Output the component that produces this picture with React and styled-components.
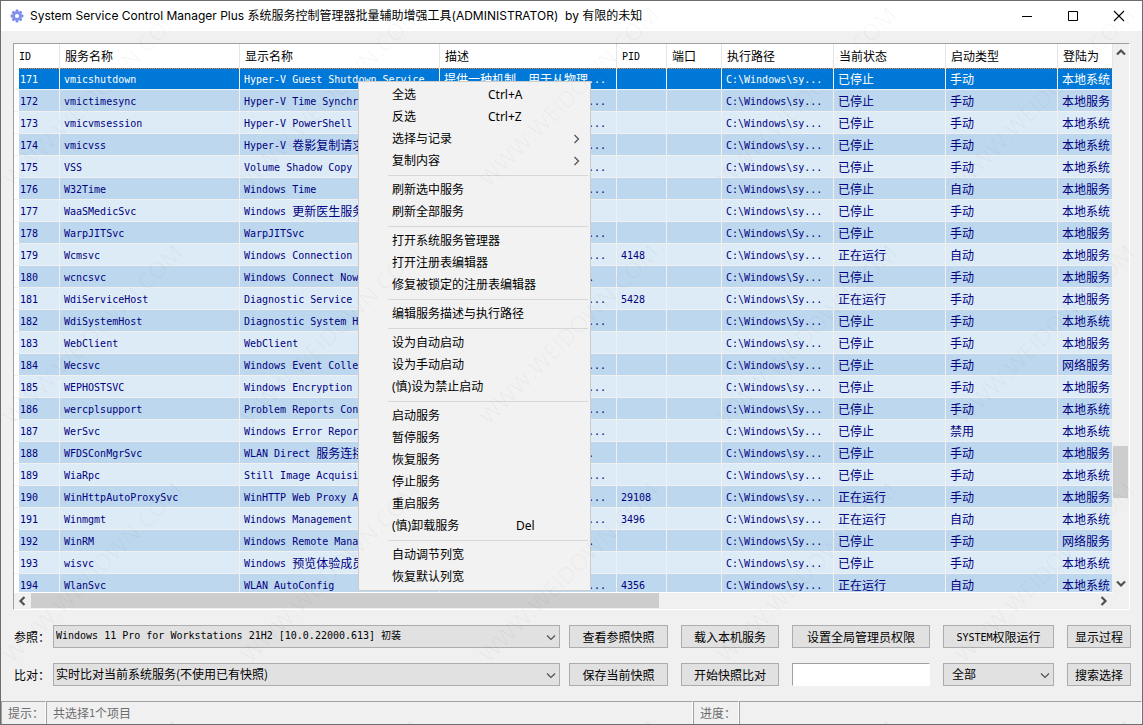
import React, { useState } from 'react';
import styled, { createGlobalStyle, css } from 'styled-components';

const columns = ['ID', '服务名称', '显示名称', '描述', 'PID', '端口', '执行路径', '当前状态', '启动类型', '登陆为'];
const columnWidths = [46, 180, 200, 177, 50, 55, 112, 112, 112];

const SY = 'C:\\Windows\\Sy...';
const sy = 'C:\\Windows\\sy...';

const services = [
  ['171', 'vmicshutdown', 'Hyper-V Guest Shutdown Service', '提供一种机制，用于从物理...', '', '', sy, '已停止', '手动', '本地系统'],
  ['172', 'vmictimesync', 'Hyper-V Time Synchronization ...', '将此虚拟机的系统时间与物...', '', '', sy, '已停止', '手动', '本地服务'],
  ['173', 'vmicvmsession', 'Hyper-V PowerShell Direct Se...', '提供一种机制，可通过虚拟...', '', '', sy, '已停止', '手动', '本地系统'],
  ['174', 'vmicvss', 'Hyper-V 卷影复制请求程序', '协调使用卷影复制服务从物...', '', '', sy, '已停止', '手动', '本地系统'],
  ['175', 'VSS', 'Volume Shadow Copy', '管理并执行用于备份和其他...', '', '', sy, '已停止', '手动', '本地系统'],
  ['176', 'W32Time', 'Windows Time', '维护在网络上的所有客户端...', '', '', sy, '已停止', '自动', '本地服务'],
  ['177', 'WaaSMedicSvc', 'Windows 更新医生服务', '启用 Windows 更新组件...', '', '', sy, '已停止', '手动', '本地系统'],
  ['178', 'WarpJITSvc', 'WarpJITSvc', '提供用于图形渲染的实时编...', '', '', SY, '已停止', '手动', '本地服务'],
  ['179', 'Wcmsvc', 'Windows Connection Manager', '根据电脑当前可用的网络连...', '4148', '', sy, '正在运行', '自动', '本地服务'],
  ['180', 'wcncsvc', 'Windows Connect Now', 'WCNCSVC 承载用于注册的...', '', '', SY, '已停止', '手动', '本地服务'],
  ['181', 'WdiServiceHost', 'Diagnostic Service Host', '诊断服务主机被诊断策略服...', '5428', '', SY, '正在运行', '手动', '本地服务'],
  ['182', 'WdiSystemHost', 'Diagnostic System Host', '诊断系统主机被诊断策略服...', '', '', SY, '已停止', '手动', '本地系统'],
  ['183', 'WebClient', 'WebClient', '使基于 Windows 的程序...', '', '', sy, '已停止', '手动', '本地服务'],
  ['184', 'Wecsvc', 'Windows Event Collector', '此服务将管理对远程源中事...', '', '', sy, '已停止', '手动', '网络服务'],
  ['185', 'WEPHOSTSVC', 'Windows Encryption Provider', '加密提供程序主机服务代理...', '', '', sy, '已停止', '手动', '本地服务'],
  ['186', 'wercplsupport', 'Problem Reports Control Panel', '此服务支持查看、发送和删...', '', '', SY, '已停止', '手动', '本地系统'],
  ['187', 'WerSvc', 'Windows Error Reporting', '允许在程序停止运行或停止...', '', '', SY, '已停止', '禁用', '本地系统'],
  ['188', 'WFDSConMgrSvc', 'WLAN Direct 服务连接管理器', '管理与无线服务 (包括的...', '', '', sy, '已停止', '手动', '本地服务'],
  ['189', 'WiaRpc', 'Still Image Acquisition Events', '启动与静止图像采集事件关...', '', '', sy, '已停止', '手动', '本地系统'],
  ['190', 'WinHttpAutoProxySvc', 'WinHTTP Web Proxy Auto', '实现了客户端堆栈并向开发...', '29108', '', sy, '正在运行', '手动', '本地服务'],
  ['191', 'Winmgmt', 'Windows Management', '提供共同的界面和对象模式...', '3496', '', sy, '正在运行', '自动', '本地系统'],
  ['192', 'WinRM', 'Windows Remote Management', 'Windows 远程管理服务执...', '', '', SY, '已停止', '手动', '网络服务'],
  ['193', 'wisvc', 'Windows 预览体验成员服务', '为 Windows 预览体验成...', '', '', sy, '已停止', '手动', '本地系统'],
  ['194', 'WlanSvc', 'WLAN AutoConfig', '提供配置、发现、连接和断...', '4356', '', sy, '正在运行', '自动', '本地系统'],
];

const menuGroups = [
  [{ label: '全选', keys: 'Ctrl+A' }, { label: '反选', keys: 'Ctrl+Z' }, { label: '选择与记录', sub: true }, { label: '复制内容', sub: true }],
  [{ label: '刷新选中服务' }, { label: '刷新全部服务' }],
  [{ label: '打开系统服务管理器' }, { label: '打开注册表编辑器' }, { label: '修复被锁定的注册表编辑器' }],
  [{ label: '编辑服务描述与执行路径' }],
  [{ label: '设为自动启动' }, { label: '设为手动启动' }, { label: '(慎)设为禁止启动' }],
  [
    { label: '启动服务' },
    { label: '暂停服务' },
    { label: '恢复服务' },
    { label: '停止服务' },
    { label: '重启服务' },
    { label: '(慎)卸载服务', keys: 'Del', wide: true },
  ],
  [{ label: '自动调节列宽' }, { label: '恢复默认列宽' }],
];

const arrows = {
  up: 'M1 6.5 L5 2.5 L9 6.5',
  down: 'M1 2.5 L5 6.5 L9 2.5',
  left: 'M6.5 1 L2.5 5 L6.5 9',
  right: 'M2.5 1 L6.5 5 L2.5 9',
};

const Arrow = ({ dir, thin }) => (
  <svg width="10" height="10" viewBox="0 0 10 10" aria-hidden="true">
    <path d={arrows[dir]} fill="none" stroke="#505050" strokeWidth={thin ? 1.2 : 2.2} />
  </svg>
);

// latin runs are half the width of a chinese character
const Mixed = ({ children }) =>
  children.split(/([\x20-\x7e]+)/).map((part, index) =>
    index % 2 ? <Half key={index}>{part}</Half> : part
  );

const Gear = () => (
  <svg width="14" height="14" viewBox="0 0 14 14" aria-hidden="true">
    <g fill="#7f8fec">
      {[0, 45, 90, 135].map(angle => (
        <rect key={angle} x="5.6" y="0.6" width="2.8" height="12.8" rx="0.6" transform={`rotate(${angle} 7 7)`} />
      ))}
      <circle cx="7" cy="7" r="4.7" />
    </g>
    <circle cx="7" cy="7" r="2.1" fill="#fff" />
  </svg>
);

const App = () => {
  const [selected, setSelected] = useState('171');
  const [search, setSearch] = useState('');

  return (
    <Window>
      <GlobalStyle />
      <TitleBar>
        <Gear />
        <Title>
          System Service Control Manager Plus 系统服务控制管理器批量辅助增强工具(ADMINISTRATOR)&nbsp; by 有限的未知
        </Title>
        <Caption aria-label="最小化">
          <svg width="12" height="12" viewBox="0 0 12 12"><path d="M1 6.5h10" stroke="#000" /></svg>
        </Caption>
        <Caption aria-label="最大化">
          <svg width="12" height="12" viewBox="0 0 12 12"><path d="M1.5 1.5h9v9h-9z" fill="none" stroke="#000" /></svg>
        </Caption>
        <Caption aria-label="关闭">
          <svg width="12" height="12" viewBox="0 0 12 12"><path d="M1 1l10 10M11 1L1 11" stroke="#000" strokeWidth="1.1" /></svg>
        </Caption>
      </TitleBar>

      <ListFrame>
        <Viewport>
          <Table>
            <colgroup>
              {columnWidths.map((width, index) => <col key={index} width={width} />)}
              <col />
            </colgroup>
            <thead>
              <tr>
                {columns.map(name => <Head key={name}><Mixed>{name}</Mixed></Head>)}
              </tr>
            </thead>
            <tbody>
              {services.map(row => (
                <Row key={row[0]} $selected={row[0] === selected} onClick={() => setSelected(row[0])}>
                  {row.map((value, index) => (
                    <Cell key={index}><Mixed>{value}</Mixed></Cell>
                  ))}
                </Row>
              ))}
            </tbody>
          </Table>
        </Viewport>
        <VerticalBar>
          <Arrow dir="up" />
          <VerticalTrack><VerticalThumb /></VerticalTrack>
          <Arrow dir="down" />
        </VerticalBar>
        <HorizontalBar>
          <Arrow dir="left" />
          <HorizontalTrack><HorizontalThumb /></HorizontalTrack>
          <Arrow dir="right" />
        </HorizontalBar>
      </ListFrame>

      <Controls>
        <FieldColumn>
          <Field>
            <Label htmlFor="reference">参照：</Label>
            <SelectBox>
              <Select id="reference" $latin>
                <option>Windows 11 Pro for Workstations 21H2 [10.0.22000.613] 初装</option>
              </Select>
              <Arrow dir="down" thin />
            </SelectBox>
          </Field>
          <Field>
            <Label htmlFor="compare">比对：</Label>
            <SelectBox>
              <Select id="compare">
                <option>实时比对当前系统服务(不使用已有快照)</option>
              </Select>
              <Arrow dir="down" thin />
            </SelectBox>
          </Field>
        </FieldColumn>
        <Actions>
          <Button>查看参照快照</Button>
          <Button>载入本机服务</Button>
          <Button>设置全局管理员权限</Button>
          <Button><Mixed>SYSTEM权限运行</Mixed></Button>
          <Button>显示过程</Button>
          <Button>保存当前快照</Button>
          <Button>开始快照比对</Button>
          <Search aria-label="搜索" value={search} onChange={e => setSearch(e.target.value)} />
          <SelectBox>
            <Select aria-label="搜索范围" $indent>
              <option>全部</option>
            </Select>
            <Arrow dir="down" thin />
          </SelectBox>
          <Button>搜索选择</Button>
        </Actions>
      </Controls>

      <StatusBar>
        <Status>提示：</Status>
        <Status><Mixed>共选择1个项目</Mixed></Status>
        <Status>进度：</Status>
        <Status />
      </StatusBar>

      <Menu role="menu">
        {menuGroups.map((group, index) => (
          <Group key={index}>
            {group.map(item => (
              <MenuItem key={item.label} role="menuitem">
                <MenuLabel $wide={item.wide}>{item.label}</MenuLabel>
                <Keys>{item.keys}</Keys>
                {item.sub && <Arrow dir="right" thin />}
              </MenuItem>
            ))}
          </Group>
        ))}
      </Menu>

      <Watermarks aria-hidden="true">
        {Array.from({ length: 20 }, (_, index) => (
          <Mark key={index}><span>WWW.WEIDOWN.COM</span></Mark>
        ))}
      </Watermarks>
    </Window>
  );
};

const GlobalStyle = createGlobalStyle`
  * {
    box-sizing: border-box;
  }
  body {
    margin: 0;
    font-family: 'Noto Sans CJK SC', sans-serif;
    font-size: 12px;
    color: #000;
  }
  button, input, select {
    font: inherit;
    color: inherit;
    margin: 0;
  }
`;

const Half = styled.span`
  font-family: 'DejaVu Sans Mono', monospace;
  font-size: 10px;
  line-height: 1;
  vertical-align: 1px;
  white-space: pre;
`;

const Window = styled.div`
  position: relative;
  display: flex;
  flex-direction: column;
  height: 100vh;
  min-height: 320px;
  overflow: hidden;
  border: 1px solid #6d6d6d;
  background: #f0f0f0;
`;

const TitleBar = styled.header`
  display: flex;
  align-items: center;
  flex: none;
  height: 30px;
  padding-left: 9px;
  background: #fff;
`;

const Title = styled.h1`
  flex: 1;
  margin: 0 0 0 6px;
  font-family: Inter, 'Noto Sans CJK SC', sans-serif;
  font-size: 12px;
  font-weight: 400;
  line-height: 18px;
  white-space: nowrap;
  overflow: hidden;
`;

const Caption = styled.button`
  display: flex;
  align-items: center;
  justify-content: center;
  width: 46px;
  height: 30px;
  padding: 0;
  border: none;
  background: none;
  &:hover {
    background: #e5e5e5;
  }
`;

const ListFrame = styled.main`
  flex: 1;
  min-height: 0;
  display: grid;
  grid-template-columns: minmax(0, 1fr) 16px;
  grid-template-rows: minmax(0, 1fr) 16px;
  margin: 12px 12px 0;
  border: 1px solid #fff;
  border-top-color: #a0a0a0;
  border-left-color: #a0a0a0;
`;

const Viewport = styled.div`
  overflow: hidden;
  border-bottom: 1px solid #fff;
  background: #fff;
`;

const Table = styled.table`
  width: 100%;
  table-layout: fixed;
  border-collapse: separate;
  border-spacing: 0;
`;

const Head = styled.th`
  height: 24px;
  padding: 0 0 0 5px;
  border-right: 1px solid #e5e5e5;
  font-weight: 400;
  line-height: 18px;
  text-align: left;
  white-space: nowrap;
  overflow: hidden;
`;

const Cell = styled.td`
  height: 22px;
  padding: 0 0 0 4px;
  border-right: 1px solid #f0f0f0;
  border-bottom: 1px solid #f0f0f0;
  line-height: 18px;
  white-space: nowrap;
  overflow: hidden;
  &:first-child {
    padding-left: 6px;
    box-shadow: inset 5px 0 #fff;
  }
`;

const Row = styled.tr`
  color: #000080;
  background: #ddebf7;
  &:nth-child(even) {
    background: #bdd7ee;
  }
  ${({ $selected }) =>
    $selected &&
    css`
      && {
        color: #fff;
        background: #0078d7;
      }
      td {
        background: repeating-linear-gradient(90deg, #ff8728 0 1px, transparent 1px 2px) 0 0 / 100% 1px no-repeat;
      }
    `}
`;

const VerticalBar = styled.div`
  display: flex;
  flex-direction: column;
  align-items: center;
  padding: 4px 0;
`;

const VerticalTrack = styled.div`
  display: flex;
  flex-direction: column;
  align-self: stretch;
  flex: 1;
  margin: 3px 0;
  &::before {
    content: '';
    flex: 385;
  }
  &::after {
    content: '';
    flex: 78;
  }
`;

const VerticalThumb = styled.div`
  flex: 52;
  margin-right: 1px;
  background: #cdcdcd;
`;

const HorizontalBar = styled.div`
  grid-column: 1;
  display: flex;
  align-items: center;
  padding: 0 4px;
`;

const HorizontalTrack = styled.div`
  display: flex;
  align-self: stretch;
  flex: 1;
  margin: 0 3px;
  &::after {
    content: '';
    flex: 41;
  }
`;

const HorizontalThumb = styled.div`
  flex: 59;
  margin-bottom: 1px;
  background: #cdcdcd;
`;

const Controls = styled.section`
  flex: none;
  display: flex;
  gap: 9px;
  padding: 15px 11px 15px 13px;
`;

const FieldColumn = styled.div`
  flex: 1;
  display: grid;
  gap: 15px;
`;

const Field = styled.div`
  display: flex;
  align-items: center;
`;

const Label = styled.label`
  flex: none;
  width: 39px;
  white-space: nowrap;
`;

const SelectBox = styled.div`
  position: relative;
  flex: 1;
  min-width: 0;
  svg {
    position: absolute;
    top: 8px;
    right: 4px;
    pointer-events: none;
  }
`;

const Select = styled.select`
  display: block;
  appearance: none;
  width: 100%;
  height: 23px;
  padding: 0 20px 2px ${({ $indent }) => ($indent ? '8px' : '2px')};
  border: 1px solid #adadad;
  border-radius: 0;
  background: #e1e1e1;
  ${({ $latin }) =>
    $latin &&
    css`
      font-family: 'DejaVu Sans Mono', 'Noto Sans CJK SC', monospace;
      font-size: 10px;
    `}
`;

const Actions = styled.div`
  flex: none;
  display: grid;
  grid-template-columns: 99px 98px 138px 111px 64px;
  gap: 15px 13px;
`;

const Button = styled.button`
  height: 23px;
  padding: 0;
  border: 1px solid #adadad;
  background: #e1e1e1;
  line-height: 20px;
  white-space: nowrap;
  &:hover {
    border-color: #0078d7;
    background: #e5f1fb;
  }
`;

const Search = styled.input`
  width: 100%;
  height: 23px;
  padding: 0 4px;
  border: 1px solid #fff;
  border-top-color: #a0a0a0;
  border-left-color: #a0a0a0;
  border-radius: 0;
  background: #fff;
  outline: none;
`;

const StatusBar = styled.footer`
  flex: none;
  display: grid;
  grid-template-columns: 45px 647fr 46px 403fr;
  height: 23px;
`;

const Status = styled.div`
  padding-left: 6px;
  border-top: 1px solid #a0a0a0;
  border-left: 1px solid #a0a0a0;
  border-right: 1px solid #fff;
  color: #6d6d6d;
  line-height: 22px;
  white-space: nowrap;
  overflow: hidden;
`;

const Menu = styled.div`
  position: absolute;
  top: 80px;
  left: 357px;
  width: 233px;
  padding: 2px;
  border: 1px solid #ccc;
  background: #f2f2f2;
  font-family: 'Noto Sans', 'Noto Sans CJK SC', sans-serif;
`;

const Group = styled.div`
  & + &::before {
    content: '';
    display: block;
    height: 1px;
    margin: 3px 0 3px 27px;
    background: #d7d7d7;
  }
`;

const MenuItem = styled.button`
  display: flex;
  align-items: center;
  width: 100%;
  height: 22px;
  padding: 0 6px 0 31px;
  border: none;
  background: none;
  line-height: 20px;
  text-align: left;
  white-space: nowrap;
  &:hover {
    background: #90c8f6;
  }
`;

const MenuLabel = styled.span`
  flex: none;
  width: ${({ $wide }) => ($wide ? '124px' : '96px')};
`;

const Keys = styled.span`
  flex: 1;
`;

const Watermarks = styled.div`
  position: absolute;
  top: -24px;
  left: -28px;
  width: 1190px;
  display: grid;
  grid-template-columns: repeat(5, 238px);
  grid-auto-rows: 238px;
  pointer-events: none;
`;

const Mark = styled.div`
  display: flex;
  align-items: center;
  justify-content: center;
  color: rgba(0, 0, 0, 0.03);
  font-family: 'Open Sans', sans-serif;
  font-size: 23px;
  white-space: nowrap;
  span {
    transform: rotate(-45deg);
  }
`;

export default App;
